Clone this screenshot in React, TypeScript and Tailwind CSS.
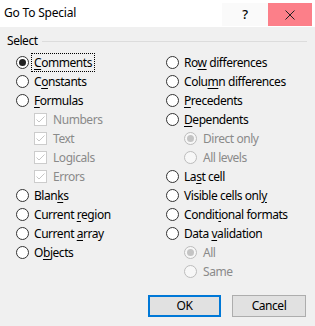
import type { ReactNode } from 'react';

type Item = {
  label: string;
  key?: number; // index of underlined access key
  kind: 'radio' | 'check' | 'subradio';
  checked?: boolean;
  disabled?: boolean;
  focus?: boolean;
};

const left: Item[] = [
  { label: 'Comments', key: 0, kind: 'radio', checked: true, focus: true },
  { label: 'Constants', key: 1, kind: 'radio' },
  { label: 'Formulas', key: 0, kind: 'radio' },
  { label: 'Numbers', kind: 'check', checked: true, disabled: true },
  { label: 'Text', kind: 'check', checked: true, disabled: true },
  { label: 'Logicals', kind: 'check', checked: true, disabled: true },
  { label: 'Errors', kind: 'check', checked: true, disabled: true },
  { label: 'Blanks', key: 4, kind: 'radio' },
  { label: 'Current region', key: 8, kind: 'radio' },
  { label: 'Current array', key: 8, kind: 'radio' },
  { label: 'Objects', key: 1, kind: 'radio' },
];

const right: Item[] = [
  { label: 'Row differences', key: 2, kind: 'radio' },
  { label: 'Column differences', key: 4, kind: 'radio' },
  { label: 'Precedents', key: 0, kind: 'radio' },
  { label: 'Dependents', key: 0, kind: 'radio' },
  { label: 'Direct only', kind: 'subradio', checked: true, disabled: true },
  { label: 'All levels', kind: 'subradio', disabled: true },
  { label: 'Last cell', key: 2, kind: 'radio' },
  { label: 'Visible cells only', key: 17, kind: 'radio' },
  { label: 'Conditional formats', key: 6, kind: 'radio' },
  { label: 'Data validation', key: 5, kind: 'radio' },
  { label: 'All', kind: 'subradio', checked: true, disabled: true },
  { label: 'Same', kind: 'subradio', disabled: true },
];

function Label({ text, k }: { text: string; k?: number }) {
  if (k === undefined || k >= text.length) return <>{text}</>;
  return (
    <>
      {text.slice(0, k)}
      <span className="underline underline-offset-2">{text[k]}</span>
      {text.slice(k + 1)}
    </>
  );
}

function Radio({ checked, disabled }: { checked?: boolean; disabled?: boolean }) {
  return (
    <span
      className={`w-[13px] h-[13px] rounded-full border flex items-center justify-center shrink-0 ${
        disabled ? 'border-[#bcbcbc] bg-[#f7f7f7]' : 'border-[#333] bg-white'
      }`}
    >
      {checked && (
        <span className={`w-[7px] h-[7px] rounded-full ${disabled ? 'bg-[#c4c4c4]' : 'bg-[#222]'}`} />
      )}
    </span>
  );
}

function Check() {
  return (
    <span className="w-[13px] h-[13px] border border-[#cccccc] bg-white flex items-center justify-center shrink-0">
      <svg width="11" height="11" viewBox="0 0 11 11">
        <path d="M1.5 5.5 L4 8 L9.5 2.5" fill="none" stroke="#c6c6c6" strokeWidth="1" />
      </svg>
    </span>
  );
}

function Row({ item }: { item: Item }) {
  const sub = item.kind !== 'radio';
  let control: ReactNode;
  if (item.kind === 'check') control = <Check />;
  else control = <Radio checked={item.checked} disabled={item.disabled} />;
  return (
    <div className={`h-[19px] flex items-center ${sub ? 'pl-[18px] gap-[4px]' : 'gap-[3px]'}`}>
      {control}
      <span
        className={`leading-[15px] py-[1px] px-[2px] ${item.disabled ? 'text-[#8a8a8a]' : 'text-black'} ${
          item.focus ? 'outline outline-1 outline-dotted outline-black outline-offset-0' : ''
        }`}
      >
        <Label text={item.label} k={item.key} />
      </span>
    </div>
  );
}

export default function App() {
  return (
    <div
      className="w-[315px] h-[326px] bg-[#f0f0f0] text-[12px] tracking-[-0.45px] text-black overflow-hidden flex flex-col"
      style={{ fontFamily: '"Segoe UI", "Noto Sans", sans-serif' }}
    >
      {/* Title bar */}
      <div className="h-[27px] bg-white flex items-start shrink-0">
        <div className="pl-[4px] pt-[5px] text-[12px] leading-[16px] tracking-[-0.2px]">Go To Special</div>
        <div className="ml-auto flex pt-[3px] pr-[3px]">
          <div className="w-[46px] h-[23px] bg-[#fafafa] flex items-center justify-center text-[13px] font-medium">?</div>
          <div className="w-[44px] h-[23px] bg-[#fc7f89] flex items-center justify-center">
            <svg width="10" height="10" viewBox="0 0 10 10">
              <path d="M0.5 0.5 L9.5 9.5 M9.5 0.5 L0.5 9.5" stroke="#222" strokeWidth="1" />
            </svg>
          </div>
        </div>
      </div>

      {/* Body */}
      <div className="flex-1 flex flex-col">
        <div className="mt-[6px] h-[16px] flex items-center pl-[7px] pr-[8px] gap-[4px]">
          <span className="leading-[16px]">Select</span>
          <span className="flex-1 h-px bg-[#dcdcdc]" />
        </div>

        <div className="mt-[4px] grid grid-cols-[150px_1fr] pl-[16px]">
          <div className="flex flex-col">
            {left.map(i => (
              <Row key={i.label} item={i} />
            ))}
          </div>
          <div className="flex flex-col">
            {right.map(i => (
              <Row key={i.label + '-r'} item={i} />
            ))}
          </div>
        </div>

        <div className="mt-[14px] flex justify-end gap-[11px] pr-[9px]">
          <button className="w-[73px] h-[22px] bg-[#e1e1e1] border-2 border-[#0078d7] leading-none">OK</button>
          <button className="w-[74px] h-[22px] bg-[#e1e1e1] border border-[#adadad] leading-none">Cancel</button>
        </div>
      </div>
    </div>
  );
}
